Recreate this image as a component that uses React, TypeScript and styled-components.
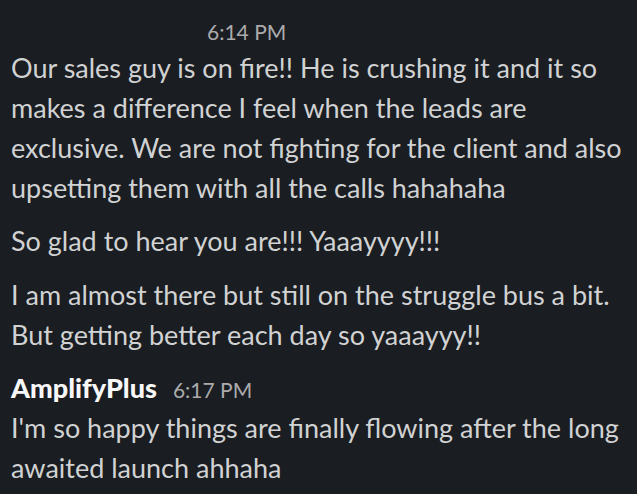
import React from "react";
import styled, { createGlobalStyle } from "styled-components";

const Global = createGlobalStyle`
  html, body {
    margin: 0;
    padding: 0;
    background: #1a1d21;
  }
  body {
    font-family: Lato, "Noto Sans", sans-serif;
    -webkit-font-smoothing: antialiased;
  }
`;

const Page = styled.div`
  width: 637px;
  height: 494px;
  background: #1a1d21;
  overflow: hidden;
  box-sizing: border-box;
  padding-top: 13.15px;
`;

const Message = styled.div`
  padding: 6.7px 11px;
  box-sizing: border-box;
  width: 637px;
`;

const Header = styled.div<{ $indent?: number; $gap?: number }>`
  display: flex;
  align-items: baseline;
  gap: 16px;
  padding-left: ${(p) => p.$indent ?? 0}px;
  margin-bottom: ${(p) => p.$gap ?? 0}px;
  line-height: 24px;
`;

const Name = styled.span`
  font-size: 27px;
  font-weight: 900;
  color: #f8f8f8;
  line-height: 40px;
`;

const Time = styled.span`
  font-size: 21px;
  color: #ababad;
`;

const Body = styled.p`
  margin: 0;
  font-size: 27px;
  line-height: 40px;
  color: #d1d2d3;
`;

const messages = [
  {
    time: "6:14 PM",
    indent: 196,
    text: "Our sales guy is on fire!! He is crushing it and it so makes a difference I feel when the leads are exclusive. We are not fighting for the client and also upsetting them with all the calls hahahaha",
  },
  { text: "So glad to hear you are!!! Yaaayyyy!!!" },
  {
    text: "I am almost there but still on the struggle bus a bit. But getting better each day so yaaayyy!!",
  },
  {
    name: "AmplifyPlus",
    time: "6:17 PM",
    text: "I'm so happy things are finally flowing after the long awaited launch ahhaha",
  },
];

export default function App() {
  return (
    <>
      <Global />
      <Page>
        {messages.map((m, i) => (
          <Message key={i}>
            {m.name ? (
              <Header>
                <Name>{m.name}</Name>
                <Time>{m.time}</Time>
              </Header>
            ) : m.time ? (
              <Header $indent={m.indent} $gap={4}>
                <Time>{m.time}</Time>
              </Header>
            ) : null}
            <Body>{m.text}</Body>
          </Message>
        ))}
      </Page>
    </>
  );
}
